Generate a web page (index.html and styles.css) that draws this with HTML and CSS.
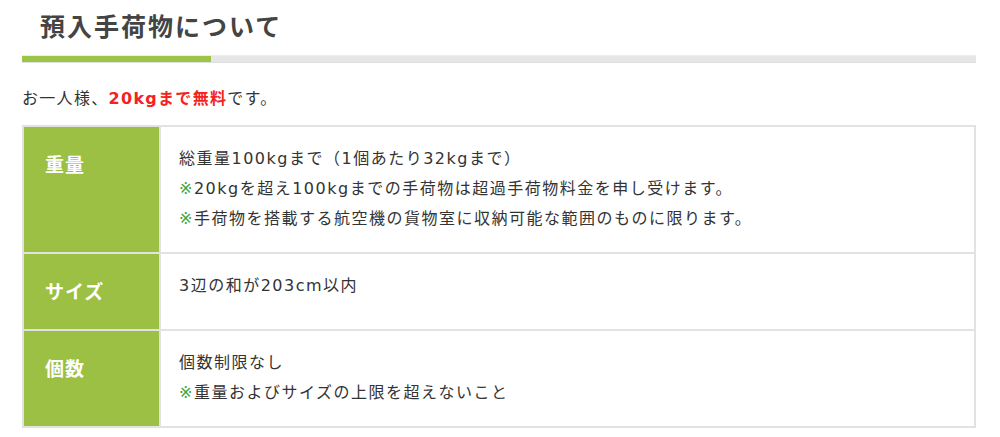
FILE: index.html
```html
<!DOCTYPE html>
<html lang="ja">
<head>
<meta charset="utf-8">
<link rel="stylesheet" href="styles.css">
</head>
<body>
<section class="section">
  <h2 class="title">預入手荷物について</h2>
  <div class="bar"><span class="bar-accent"></span></div>
  <p class="lead">お一人様、<strong class="red">20kgまで無料</strong>です。</p>
  <table class="spec">
    <tr>
      <th>重量</th>
      <td>
        <p>総重量100kgまで（1個あたり32kgまで）</p>
        <p><span class="mark">※</span>20kgを超え100kgまでの手荷物は超過手荷物料金を申し受けます。</p>
        <p><span class="mark">※</span>手荷物を搭載する航空機の貨物室に収納可能な範囲のものに限ります。</p>
      </td>
    </tr>
    <tr>
      <th>サイズ</th>
      <td><p>3辺の和が203cm以内</p></td>
    </tr>
    <tr>
      <th>個数</th>
      <td>
        <p>個数制限なし</p>
        <p><span class="mark">※</span>重量およびサイズの上限を超えないこと</p>
      </td>
    </tr>
  </table>
</section>
</body>
</html>
```

FILE: styles.css
```css
* { box-sizing: border-box; }
body {
  margin: 0;
  background: #fff;
  font-family: "DejaVu Sans", "Noto Sans CJK JP", sans-serif;
  color: #333;
}
.section {
  padding: 0 24px 0 22px;
}
.title {
  margin: 0;
  padding: 8px 0 0 18px;
  font-family: "Noto Sans CJK JP", sans-serif;
  font-size: 25px;
  line-height: 35px;
  font-weight: 700;
  letter-spacing: 0.08em;
  color: #444;
}
.bar {
  margin-top: 12px;
  height: 8px;
  background: #e6e6e6;
  border-top: 1px solid #ececec;
  border-bottom: 1px solid #dedede;
  display: flex;
}
.bar-accent {
  width: 189px;
  background: #9cc545;
}
.lead {
  margin: 21px 0 11px;
  font-size: 16px;
  line-height: 30px;
  letter-spacing: 1.3px;
}
.red {
  color: #f5221d;
  font-weight: 700;
}
.spec {
  width: 100%;
  border-collapse: collapse;
  border: 2px solid #e2e2e2;
}
.spec th, .spec td {
  border: 2px solid #e2e2e2;
  vertical-align: top;
  text-align: left;
}
.spec th {
  width: 137px;
  background: #9cc043;
  color: #fff;
  font-family: "Noto Sans CJK JP", sans-serif;
  font-size: 19px;
  line-height: 29px;
  letter-spacing: 0.05em;
  font-weight: 700;
  padding: 22px 10px 24px 21px;
}
.spec td {
  padding: 17px 18px 18px 18px;
  font-size: 16px;
  line-height: 30px;
  letter-spacing: 1.5px;
  color: #333;
}
.spec td p { margin: 0; }
.mark { color: #3fa535; }
```
